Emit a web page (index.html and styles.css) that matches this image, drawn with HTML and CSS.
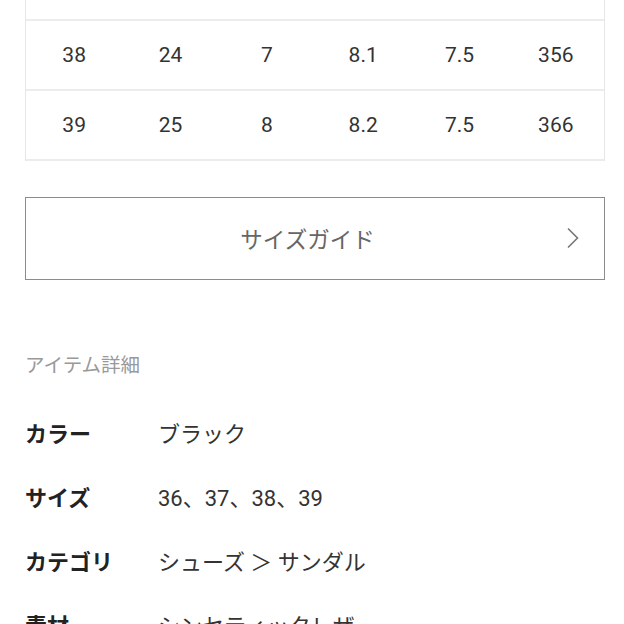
FILE: index.html
```html
<!DOCTYPE html>
<html lang="ja">
<head>
<meta charset="utf-8">
<title>アイテム詳細</title>
<link rel="stylesheet" href="styles.css">
</head>
<body>
<main class="page">
  <div class="size-table">
    <div class="size-row size-row--above"></div>
    <div class="size-row">
      <span>38</span><span>24</span><span>7</span><span>8.1</span><span>7.5</span><span>356</span>
    </div>
    <div class="size-row">
      <span>39</span><span>25</span><span>8</span><span>8.2</span><span>7.5</span><span>366</span>
    </div>
  </div>

  <a class="guide-button" href="#">
    <span class="guide-label">サイズガイド</span>
    <svg class="chevron" width="14" height="22" viewBox="0 0 14 22" aria-hidden="true">
      <path d="M2 1.5 L11.5 11 L2 20.5" fill="none" stroke="#777" stroke-width="1.6"/>
    </svg>
  </a>

  <h2 class="section-title">アイテム詳細</h2>

  <dl class="details">
    <div class="detail-row"><dt>カラー</dt><dd>ブラック</dd></div>
    <div class="detail-row"><dt>サイズ</dt><dd>36、37、38、39</dd></div>
    <div class="detail-row"><dt>カテゴリ</dt><dd>シューズ ＞ サンダル</dd></div>
    <div class="detail-row"><dt>素材</dt><dd>シンセティックレザー</dd></div>
  </dl>
</main>
</body>
</html>
```

FILE: styles.css
```css
html, body {
  margin: 0;
  padding: 0;
  background: #fff;
}

body {
  font-family: "Roboto", "Noto Sans CJK JP", sans-serif;
  color: #333;
  overflow: hidden;
}

.page {
  width: 580px;
  margin: -49px 0 0 25px;
}

.size-table {
  border-left: 1px solid #e6e6e6;
  border-right: 1px solid #e6e6e6;
}

.size-row {
  display: grid;
  grid-template-columns: repeat(6, 1fr);
  align-items: center;
  height: 70px;
  box-sizing: border-box;
  border-bottom: 2px solid #ececec;
  font-size: 21px;
  color: #333;
  text-align: center;
}

.guide-button {
  display: flex;
  align-items: center;
  justify-content: center;
  position: relative;
  margin-top: 36px;
  padding-right: 15px;
  height: 83px;
  box-sizing: border-box;
  border: 1px solid #8c8c8c;
  text-decoration: none;
  color: #666;
  font-family: "Noto Sans CJK JP", sans-serif;
  font-size: 22.5px;
}

.guide-label {
  margin-top: -2px;
}

.chevron {
  position: absolute;
  right: 24px;
  top: 50%;
  margin-top: -12px;
}

.section-title {
  margin: 70px 0 0;
  font-family: "Noto Sans CJK JP", sans-serif;
  font-weight: normal;
  font-size: 19.5px;
  line-height: 28px;
  color: #999;
}

.details {
  margin: 22px 0 0;
}

.detail-row {
  display: grid;
  grid-template-columns: 133px 1fr;
  align-items: center;
  height: 64px;
}

.detail-row dt {
  font-family: "Noto Sans CJK JP", sans-serif;
  font-weight: bold;
  font-size: 22px;
  color: #222;
}

.detail-row dd {
  margin: 0;
  font-family: "Roboto", "Noto Sans CJK JP", sans-serif;
  font-size: 22px;
  color: #333;
}
```
